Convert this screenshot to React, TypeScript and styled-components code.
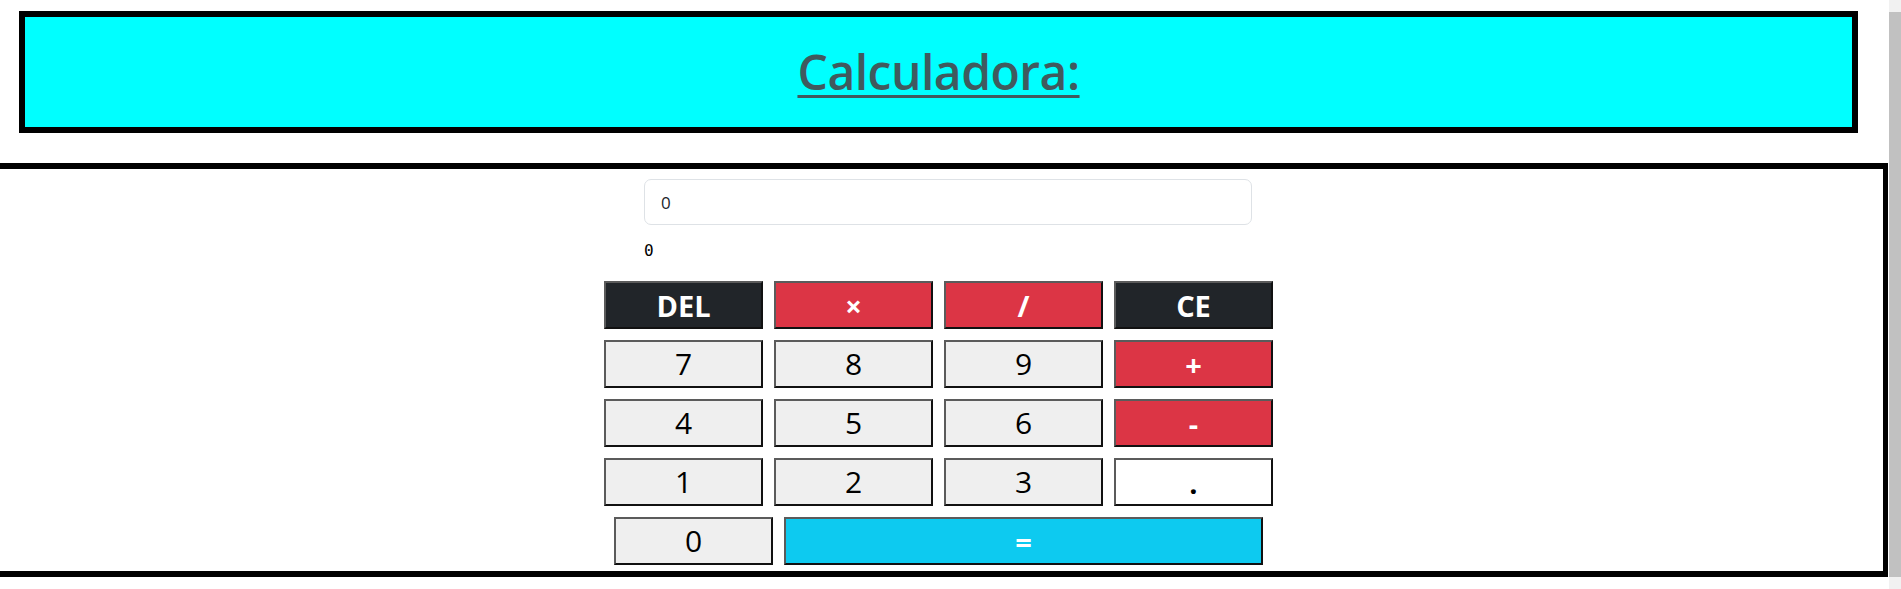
import React from "react";
import styled, { createGlobalStyle } from "styled-components";

const GlobalStyle = createGlobalStyle`
  html, body {
    margin: 0;
    padding: 0;
    background: #ffffff;
  }
  body {
    font-family: "Open Sans", "Noto Sans", sans-serif;
    color: #212529;
    overflow: hidden;
  }
`;

const Page = styled.div`
  padding: 11px 0 40px 0;
`;

const ScrollTrack = styled.div`
  position: fixed;
  top: 0;
  right: 0;
  width: 12px;
  height: 100vh;
  background: #f1f1f1;
  display: flex;
  flex-direction: column;
  padding: 12px 0;
  box-sizing: border-box;
`;

const ScrollThumb = styled.div`
  flex: 1;
  background: #c1c1c1;
`;

const Header = styled.header`
  box-sizing: border-box;
  margin-left: 19px;
  width: 1839px;
  height: 122px;
  border: 6px solid #000000;
  background: #00ffff;
  display: flex;
  align-items: center;
  justify-content: center;
`;

const Title = styled.h1`
  margin: 0;
  font-family: "Open Sans", "Noto Sans", sans-serif;
  font-size: 48px;
  font-weight: 600;
  line-height: 1.2;
  color: #405a5e;
  text-decoration: underline;
  text-decoration-thickness: 3px;
  text-underline-offset: 5px;
  letter-spacing: -0.5px;
`;

const Panel = styled.main`
  box-sizing: border-box;
  margin: 30px 0 0 -12px;
  width: 1900px;
  border: 6px solid #000000;
  border-right-width: 5px;
  padding: 10px 0 6px 0;
`;

const Calculator = styled.div`
  width: 669px;
  margin: 0 auto;
  display: flex;
  flex-direction: column;
`;

const Display = styled.input`
  box-sizing: border-box;
  margin-left: 40px;
  width: 608px;
  height: 46px;
  padding: 0 16px;
  border: 1px solid #dee2e6;
  border-radius: 7px;
  background: #ffffff;
  font-family: "Open Sans", "Noto Sans", sans-serif;
  font-size: 17px;
  color: #212529;
  outline: none;
`;

const Output = styled.div`
  margin: 14px 0 0 40px;
  font-family: "DejaVu Sans Mono", "Liberation Mono", monospace;
  font-size: 16px;
  line-height: 24px;
  color: #000000;
`;

const Keypad = styled.div`
  margin-top: 18px;
  display: grid;
  grid-template-columns: repeat(4, 159px);
  grid-auto-rows: 48px;
  gap: 11px;
`;

const BottomRow = styled.div`
  margin-top: 11px;
  padding-left: 10px;
  display: flex;
  gap: 11px;
`;

type Variant = "dark" | "danger" | "light" | "white" | "info";

const palette: Record<Variant, { bg: string; fg: string }> = {
  dark: { bg: "#212529", fg: "#ffffff" },
  danger: { bg: "#dc3545", fg: "#ffffff" },
  light: { bg: "#efefef", fg: "#000000" },
  white: { bg: "#ffffff", fg: "#000000" },
  info: { bg: "#0dcaf0", fg: "#ffffff" },
};

const Key = styled.button<{ $variant: Variant; $width?: number }>`
  box-sizing: border-box;
  width: ${(p) => (p.$width ? `${p.$width}px` : "100%")};
  height: 48px;
  margin: 0;
  padding: 0;
  display: flex;
  align-items: center;
  justify-content: center;
  border-width: 2px;
  border-style: solid;
  border-color: #5b5b5b #111111 #111111 #5b5b5b;
  border-radius: 0;
  background: ${(p) => palette[p.$variant].bg};
  color: ${(p) => palette[p.$variant].fg};
  font-family: "Open Sans", "Noto Sans", sans-serif;
  font-size: ${(p) => (p.$variant === "light" ? "30px" : "29px")};
  font-weight: ${(p) => (p.$variant === "light" ? 400 : 700)};
  line-height: 1;
  cursor: pointer;
`;

const keys: { label: string; variant: Variant }[] = [
  { label: "DEL", variant: "dark" },
  { label: "×", variant: "danger" },
  { label: "/", variant: "danger" },
  { label: "CE", variant: "dark" },
  { label: "7", variant: "light" },
  { label: "8", variant: "light" },
  { label: "9", variant: "light" },
  { label: "+", variant: "danger" },
  { label: "4", variant: "light" },
  { label: "5", variant: "light" },
  { label: "6", variant: "light" },
  { label: "-", variant: "danger" },
  { label: "1", variant: "light" },
  { label: "2", variant: "light" },
  { label: "3", variant: "light" },
  { label: ".", variant: "white" },
];

export default function App() {
  return (
    <>
      <GlobalStyle />
      <Page>
        <Header>
          <Title>Calculadora:</Title>
        </Header>
        <Panel>
          <Calculator>
            <Display type="text" defaultValue="0" readOnly />
            <Output>0</Output>
            <Keypad>
              {keys.map((k) => (
                <Key key={k.label} $variant={k.variant}>
                  {k.label}
                </Key>
              ))}
            </Keypad>
            <BottomRow>
              <Key $variant="light" $width={159}>
                0
              </Key>
              <Key $variant="info" $width={479}>
                =
              </Key>
            </BottomRow>
          </Calculator>
        </Panel>
      </Page>
      <ScrollTrack aria-hidden="true">
        <ScrollThumb />
      </ScrollTrack>
    </>
  );
}
